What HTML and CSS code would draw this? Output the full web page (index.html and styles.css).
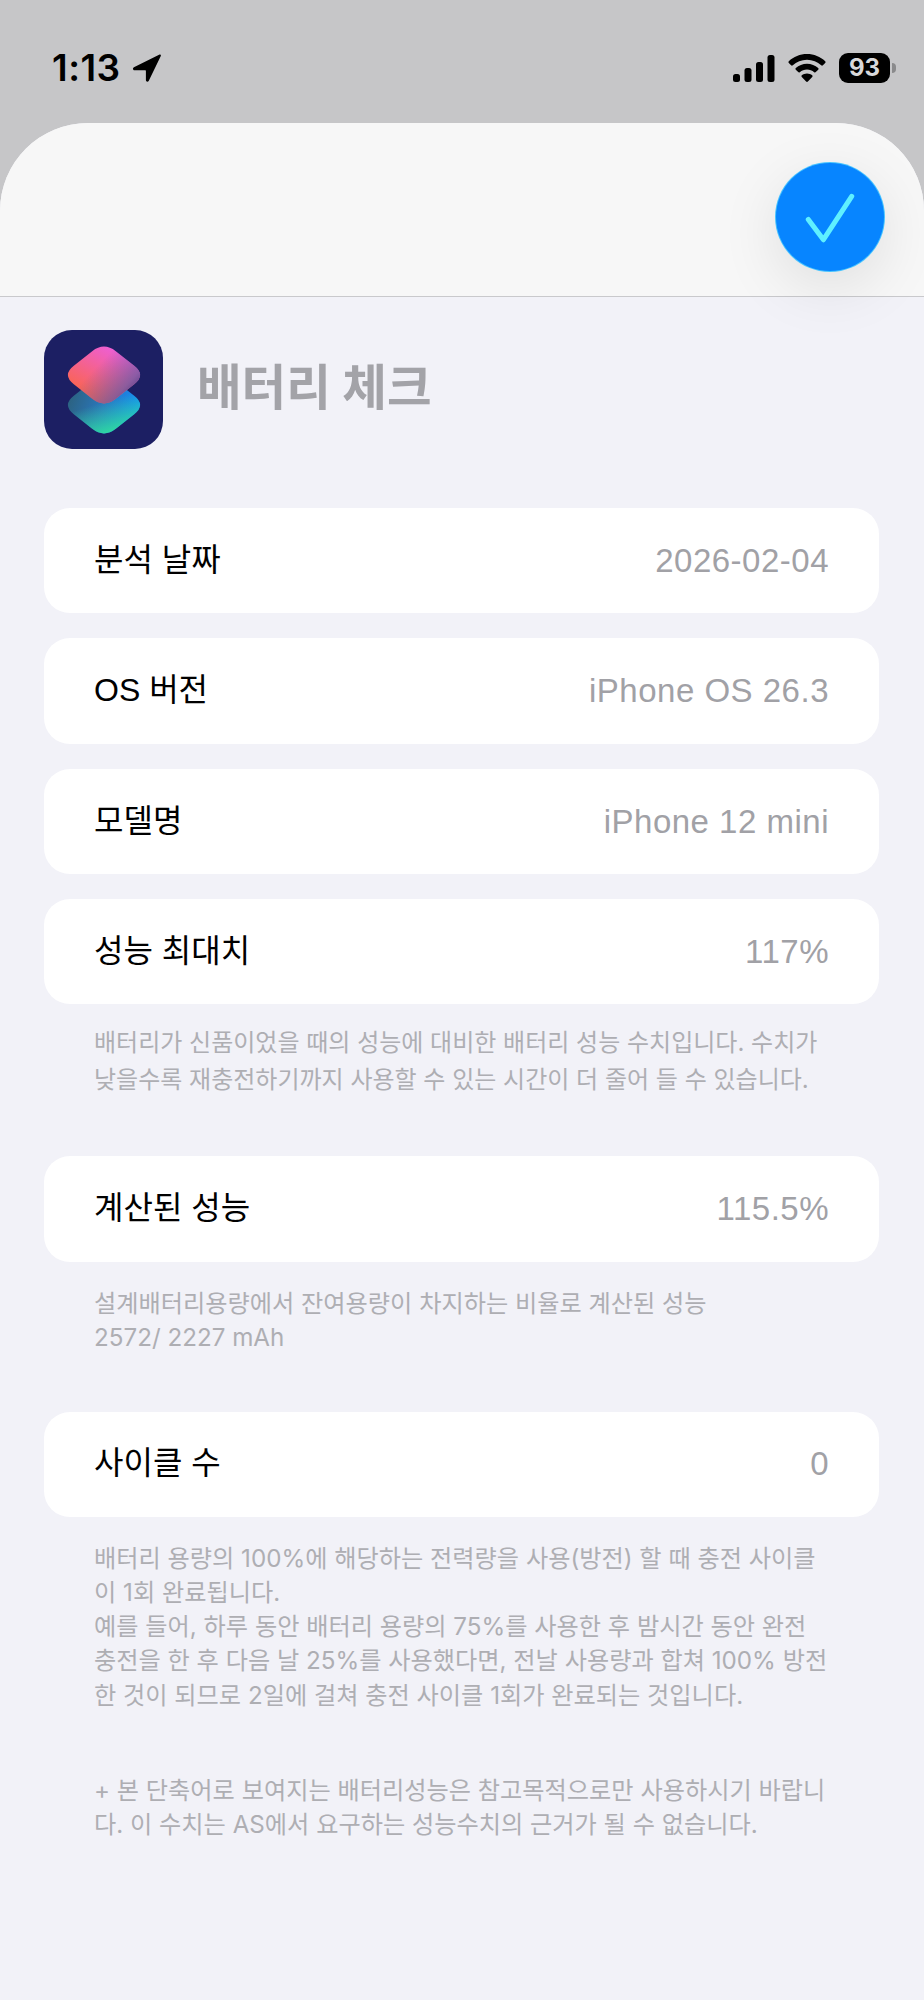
FILE: index.html
```html
<!DOCTYPE html>
<html lang="ko">
<head>
<meta charset="utf-8">
<title>배터리 체크</title>
<link rel="stylesheet" href="styles.css">
</head>
<body>
<div class="statusbar">
  <div class="status-left">
    <span class="time">1:13</span>
    <svg class="loc" viewBox="0 0 29 28"><path d="M27.6.6 1.9 13.2c-1.6.8-1.1 3 .7 3h10.7c.4 0 .6.2.6.6v9.3c0 1.8 2.1 2.3 2.9.7L28.8 2c.4-1-.3-1.8-1.2-1.4Z"/></svg>
  </div>
  <div class="status-right">
    <svg class="signal" viewBox="0 0 42 27"><rect x="0" y="19" width="7" height="8" rx="2.5"/><rect x="11.5" y="13" width="7" height="14" rx="2.5"/><rect x="23" y="7" width="7" height="20" rx="2.5"/><rect x="34.5" y="0" width="7" height="27" rx="2.5"/></svg>
    <svg class="wifi" viewBox="0 0 38 28"><path d="M19 0C12 0 5.6 2.7.8 7.2c-.5.5-.5 1.2 0 1.7l2.3 2.4c.5.5 1.2.5 1.7 0C8.5 7.8 13.5 5.700 19 5.700s10.500 2.100 14.200 5.600c.5.5 1.200.5 1.700 0l2.300-2.400c.5-.5.5-1.200 0-1.700C32.400 2.700 26 0 19 0Z"/><path d="M19 9.700c-4.300 0-8.200 1.600-11.200 4.300-.5.5-.5 1.200 0 1.700l2.400 2.400c.4.5 1.100.5 1.600.1 2-1.700 4.500-2.700 7.200-2.700s5.200 1 7.200 2.700c.5.4 1.200.4 1.600-.1l2.400-2.400c.5-.5.5-1.200 0-1.700-3-2.700-6.900-4.300-11.200-4.300Z"/><path d="M19 19.400c-2 0-3.800.7-5.200 1.900-.5.5-.5 1.200 0 1.700l4.300 4.500c.5.5 1.300.5 1.800 0l4.300-4.500c.5-.5.5-1.200 0-1.700-1.400-1.200-3.200-1.900-5.200-1.900Z"/></svg>
    <div class="battery"><span class="battery-level">93</span><span class="battery-nub"></span></div>
  </div>
</div>

<main class="sheet">
  <header class="sheet-head"></header>
  <button class="done" type="button" aria-label="완료">
    <svg viewBox="0 0 107 107"><path d="M32 56 47 76 75 33"/></svg>
  </button>

  <div class="sheet-body">
    <div class="title-row">
      <svg class="app-icon" viewBox="0 0 119 119">
        <defs>
          <path id="tile" d="M48.2 21.2Q60 12 71.8 21.2L90.2 35.8Q102 45 90.2 54.2L71.8 68.8Q60 78 48.2 68.8L29.8 54.2Q18 45 29.8 35.8Z"/>
          <linearGradient id="lower" x1="0" y1="0.2" x2="1" y2="0.5">
            <stop offset="0" stop-color="#2c5f78"/>
            <stop offset="0.55" stop-color="#2a78c0"/>
            <stop offset="1" stop-color="#0f8cff"/>
          </linearGradient>
          <linearGradient id="lowerGlow" x1="0.35" y1="0.5" x2="0.55" y2="1">
            <stop offset="0" stop-color="#2fd8a0" stop-opacity="0"/>
            <stop offset="1" stop-color="#2fd8a0"/>
          </linearGradient>
          <linearGradient id="upper" x1="0.15" y1="0.7" x2="0.6" y2="0.05">
            <stop offset="0" stop-color="#f9645a"/>
            <stop offset="1" stop-color="#ee5fd0"/>
          </linearGradient>
          <linearGradient id="upperFade" x1="0.4" y1="0.35" x2="1" y2="0.8">
            <stop offset="0" stop-color="#6a5aa0" stop-opacity="0"/>
            <stop offset="0.7" stop-color="#6a5aa0" stop-opacity="0.75"/>
            <stop offset="1" stop-color="#3a3480" stop-opacity="0.9"/>
          </linearGradient>
        </defs>
        <rect width="119" height="119" rx="28" fill="#1c1f63"/>
        <use href="#tile" y="30" fill="url(#lower)"/>
        <use href="#tile" y="30" fill="url(#lowerGlow)"/>
        <use href="#tile" fill="url(#upper)"/>
        <use href="#tile" fill="url(#upperFade)"/>
      </svg>
      <h1 class="title">배터리 체크</h1>
    </div>

    <div class="row row-first"><span class="label">분석 날짜</span><span class="value">2026-02-04</span></div>
    <div class="row row-tall"><span class="label">OS 버전</span><span class="value">iPhone OS 26.3</span></div>
    <div class="row"><span class="label">모델명</span><span class="value">iPhone 12 mini</span></div>
    <div class="row"><span class="label">성능 최대치</span><span class="value">117%</span></div>
    <p class="note note-loose">배터리가 신품이었을 때의 성능에 대비한 배터리 성능 수치입니다. 수치가<br>낮을수록 재충전하기까지 사용할 수 있는 시간이 더 줄어 들 수 있습니다.</p>

    <div class="row row-section row-tall"><span class="label">계산된 성능</span><span class="value">115.5%</span></div>
    <p class="note">설계배터리용량에서 잔여용량이 차지하는 비율로 계산된 성능<br>2572/ 2227 mAh</p>

    <div class="row row-section"><span class="label">사이클 수</span><span class="value">0</span></div>
    <p class="note">배터리 용량의 100%에 해당하는 전력량을 사용(방전) 할 때 충전 사이클<br>이 1회 완료됩니다.<br>예를 들어, 하루 동안 배터리 용량의 75%를 사용한 후 밤시간 동안 완전<br>충전을 한 후 다음 날 25%를 사용했다면, 전날 사용량과 합쳐 100% 방전<br>한 것이 되므로 2일에 걸쳐 충전 사이클 1회가 완료되는 것입니다.</p>

    <p class="note note-foot">+ 본 단축어로 보여지는 배터리성능은 참고목적으로만 사용하시기 바랍니<br>다. 이 수치는 AS에서 요구하는 성능수치의 근거가 될 수 없습니다.</p>
  </div>
</main>
</body>
</html>
```

FILE: styles.css
```css
* {
  box-sizing: border-box;
}

html,
body {
  margin: 0;
  padding: 0;
}

body {
  width: 924px;
  height: 2000px;
  overflow: hidden;
  background: #c6c6c8;
  font-family: "Inter", "Noto Sans CJK KR", sans-serif;
}

/* Status bar */
.statusbar {
  height: 123px;
  padding: 53px 34px 0 52px;
  display: flex;
  justify-content: space-between;
  align-items: flex-start;
}

.status-left {
  display: flex;
  align-items: center;
  gap: 11px;
}

.time {
  font-size: 37px;
  line-height: 30px;
  font-weight: 600;
  letter-spacing: 0.5px;
  color: #000;
}

.loc {
  width: 29px;
  height: 28px;
  fill: #000;
}

.status-right {
  display: flex;
  align-items: center;
  gap: 13px;
}

.signal {
  width: 42px;
  height: 27px;
  fill: #000;
}

.wifi {
  width: 38px;
  height: 28px;
  fill: #000;
}

.battery {
  position: relative;
  width: 51px;
  height: 30px;
  border-radius: 9px;
  background: #000;
  display: flex;
  align-items: center;
  justify-content: center;
}

.battery-level {
  font-size: 24px;
  font-weight: 700;
  line-height: 30px;
  color: #d8d8da;
}

.battery-nub {
  position: absolute;
  right: -6px;
  top: 10px;
  width: 4px;
  height: 10px;
  border-radius: 0 4px 4px 0;
  background: #8a8a8c;
}

/* Sheet */
.sheet {
  position: relative;
  height: 1877px;
  border-radius: 88px 88px 0 0;
  background: #f2f2f8;
  overflow: hidden;
}

.sheet-head {
  height: 174px;
  background: #f7f7f7;
  border-bottom: 1px solid #c9c9cc;
}

.done {
  position: absolute;
  top: 40px;
  right: 40px;
  width: 108px;
  height: 108px;
  padding: 0;
  border: 0;
  border-radius: 50%;
  background: #0785ff;
  box-shadow: 0 0 0 1px #46c4ff, 0 16px 60px rgba(0, 0, 0, 0.1);
}

.done svg {
  display: block;
  width: 100%;
  height: 100%;
  fill: none;
  stroke: #5ff0ff;
  stroke-width: 5;
  stroke-linecap: round;
  stroke-linejoin: round;
}

.sheet-body {
  padding: 32px 45px 0 44px;
}

.title-row {
  display: flex;
  align-items: center;
  gap: 34px;
  height: 120px;
}

.app-icon {
  width: 119px;
  height: 119px;
  flex: none;
}

.title {
  margin: 0 0 3px;
  font-size: 48.5px;
  line-height: 60px;
  font-weight: 700;
  color: #a3a3a8;
}

/* Rows */
.row {
  height: 105px;
  margin-top: 25px;
  padding: 0 50px;
  background: #fff;
  border-radius: 26px;
  display: flex;
  justify-content: space-between;
  align-items: center;
  white-space: nowrap;
}

.row-first {
  margin-top: 59px;
}

.row-tall {
  height: 106px;
}

.row-section {
  margin-top: 56px;
}

.label {
  margin-bottom: 8px;
  font-family: "Liberation Sans", "Noto Sans CJK KR", sans-serif;
  font-size: 32px;
  color: #000;
}

.value {
  font-family: "Liberation Sans", "Noto Sans CJK KR", sans-serif;
  font-size: 33px;
  letter-spacing: 0.5px;
  color: #a1a1a6;
}

/* Footnotes under the rows */
.note {
  margin: 25px 0 0;
  padding: 0 50px;
  font-size: 24.2px;
  line-height: 34.3px;
  color: #aeaeb3;
  white-space: nowrap;
}

.note-loose {
  margin: 20px 0 58px;
  font-size: 24px;
  line-height: 37px;
}

.note-foot {
  margin-top: 61px;
}
```
